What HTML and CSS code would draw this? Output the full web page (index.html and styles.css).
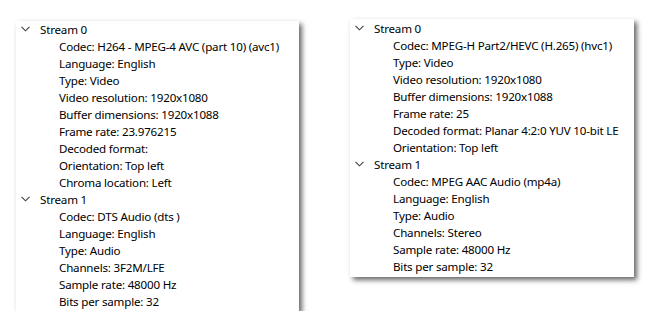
FILE: index.html
```html
<!DOCTYPE html>
<html>
<head>
  <title>Stream info</title>
<link rel="stylesheet" href="styles.css">
</head>
<body>
  <div class="panels">
    <ul class="tree tree-left">
      <li class="node">
        <div class="row stream"><svg class="chev" width="9" height="6" viewBox="0 0 9 6"><path d="M0.5 0.8 L4.5 4.8 L8.5 0.8" fill="none" stroke="#404040" stroke-width="1.1"/></svg>Stream 0</div>
        <ul class="children">
          <li class="row">Codec: H264 - MPEG-4 AVC (part 10) (avc1)</li>
          <li class="row">Language: English</li>
          <li class="row">Type: Video</li>
          <li class="row">Video resolution: 1920x1080</li>
          <li class="row">Buffer dimensions: 1920x1088</li>
          <li class="row">Frame rate: 23.976215</li>
          <li class="row">Decoded format:</li>
          <li class="row">Orientation: Top left</li>
          <li class="row">Chroma location: Left</li>
        </ul>
      </li>
      <li class="node">
        <div class="row stream"><svg class="chev" width="9" height="6" viewBox="0 0 9 6"><path d="M0.5 0.8 L4.5 4.8 L8.5 0.8" fill="none" stroke="#404040" stroke-width="1.1"/></svg>Stream 1</div>
        <ul class="children">
          <li class="row">Codec: DTS Audio (dts )</li>
          <li class="row">Language: English</li>
          <li class="row">Type: Audio</li>
          <li class="row">Channels: 3F2M/LFE</li>
          <li class="row">Sample rate: 48000 Hz</li>
          <li class="row">Bits per sample: 32</li>
        </ul>
      </li>
    </ul>

    <ul class="tree tree-right">
      <li class="node">
        <div class="row stream"><svg class="chev" width="9" height="6" viewBox="0 0 9 6"><path d="M0.5 0.8 L4.5 4.8 L8.5 0.8" fill="none" stroke="#404040" stroke-width="1.1"/></svg>Stream 0</div>
        <ul class="children">
          <li class="row">Codec: MPEG-H Part2/HEVC (H.265) (hvc1)</li>
          <li class="row">Type: Video</li>
          <li class="row">Video resolution: 1920x1080</li>
          <li class="row">Buffer dimensions: 1920x1088</li>
          <li class="row">Frame rate: 25</li>
          <li class="row">Decoded format: Planar 4:2:0 YUV 10-bit LE</li>
          <li class="row">Orientation: Top left</li>
        </ul>
      </li>
      <li class="node">
        <div class="row stream"><svg class="chev" width="9" height="6" viewBox="0 0 9 6"><path d="M0.5 0.8 L4.5 4.8 L8.5 0.8" fill="none" stroke="#404040" stroke-width="1.1"/></svg>Stream 1</div>
        <ul class="children">
          <li class="row">Codec: MPEG AAC Audio (mp4a)</li>
          <li class="row">Language: English</li>
          <li class="row">Type: Audio</li>
          <li class="row">Channels: Stereo</li>
          <li class="row">Sample rate: 48000 Hz</li>
          <li class="row">Bits per sample: 32</li>
        </ul>
      </li>
    </ul>
  </div>
</body>
</html>
```

FILE: styles.css
```css
body {
  margin: 0;
  background-color: #fff;
  font-family: "Noto Sans", "Open Sans", sans-serif;
  font-size: 11.6px;
  letter-spacing: -0.2px;
  color: #000;
}

.panels {
  display: flex;
  align-items: flex-start;
  padding-left: 16px;
}

ul {
  list-style: none;
  margin: 0;
  padding: 0;
}

.tree {
  background-color: #fff;
  box-shadow: 3px 3px 5px rgba(0, 0, 0, 0.6);
  box-sizing: border-box;
}

.tree-left {
  width: 283px;
  height: 290px;
  margin-top: 21px;
}

.tree-right {
  width: 284px;
  height: 258px;
  margin-top: 19px;
  margin-left: 51px;
  padding-top: 1px;
}

.row {
  height: 17px;
  line-height: 17px;
  white-space: nowrap;
}

.stream {
  display: flex;
  align-items: center;
  padding-left: 5px;
}

.chev {
  margin-right: 10px;
  margin-top: -2px;
}

.children .row {
  padding-left: 43px;
}
```
